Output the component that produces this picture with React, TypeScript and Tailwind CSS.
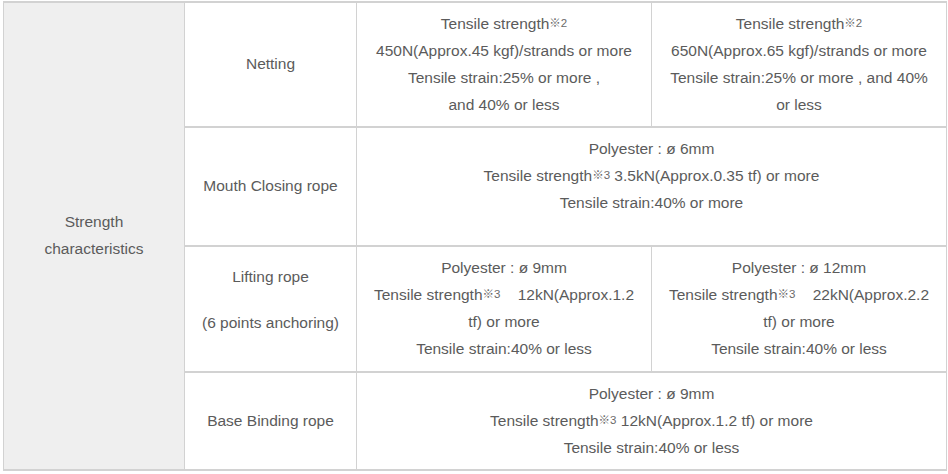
import React from "react";

const cell =
  "border-x border-y-2 border-[#d2d2d2] text-center align-middle px-1 pb-[2px]";

function Note({ n }: { n: string }) {
  return <sup className="text-[11.5px] relative -top-[2px] text-[#6a6a6a]">※{n}</sup>;
}

export default function App() {
  return (
    <div
      className="w-[948px] h-[474px] bg-white pt-px pl-[3px]"
      style={{ fontFamily: '"Liberation Sans", Arial, "Noto Sans CJK JP", sans-serif' }}
    >
      <table className="border-collapse text-[15.5px] leading-[27px] text-[#5b5b5b] w-[943px] table-fixed">
        <colgroup>
          <col className="w-[181px]" />
          <col className="w-[172px]" />
          <col className="w-[295px]" />
          <col className="w-[295px]" />
        </colgroup>
        <tbody>
          <tr className="h-[125px]">
            <td rowSpan={4} className={`${cell} bg-[#efefef]`}>
              Strength
              <br />
              characteristics
            </td>
            <td className={cell}>Netting</td>
            <td className={cell}>
              Tensile strength<Note n="2" />
              <br />
              450N(Approx.45 kgf)/strands or more
              <br />
              Tensile strain:25% or more ,
              <br />
              and 40% or less
            </td>
            <td className={cell}>
              Tensile strength<Note n="2" />
              <br />
              650N(Approx.65 kgf)/strands or more
              <br />
              Tensile strain:25% or more , and 40%
              <br />
              or less
            </td>
          </tr>
          <tr className="h-[119px]">
            <td className={cell}>Mouth Closing rope</td>
            <td className="border-x border-y-2 border-[#d2d2d2] text-center align-middle px-1 pb-[22px]" colSpan={2}>
              Polyester : ø 6mm
              <br />
              Tensile strength<Note n="3" /> 3.5kN(Approx.0.35 tf) or more
              <br />
              Tensile strain:40% or more
            </td>
          </tr>
          <tr className="h-[126px]">
            <td className="border-x border-y-2 border-[#d2d2d2] text-center align-middle px-1 pb-[20px]">
              <div>Lifting rope</div>
              <div className="mt-[19px]">(6 points anchoring)</div>
            </td>
            <td className={cell}>
              Polyester : ø 9mm
              <br />
              Tensile strength<Note n="3" />
              {"\u00a0\u00a0\u00a0 "}12kN(Approx.1.2
              <br />
              tf) or more
              <br />
              Tensile strain:40% or less
            </td>
            <td className={cell}>
              Polyester : ø 12mm
              <br />
              Tensile strength<Note n="3" />
              {"\u00a0\u00a0\u00a0 "}22kN(Approx.2.2
              <br />
              tf) or more
              <br />
              Tensile strain:40% or less
            </td>
          </tr>
          <tr className="h-[98px]">
            <td className={cell}>Base Binding rope</td>
            <td className={cell} colSpan={2}>
              Polyester : ø 9mm
              <br />
              Tensile strength<Note n="3" /> 12kN(Approx.1.2 tf) or more
              <br />
              Tensile strain:40% or less
            </td>
          </tr>
        </tbody>
      </table>
    </div>
  );
}
